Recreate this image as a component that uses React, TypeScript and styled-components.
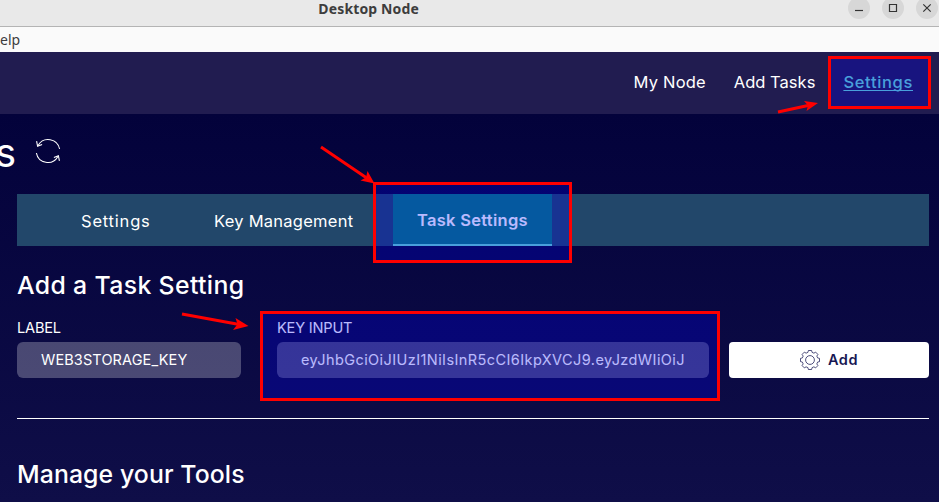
import React from 'react';
import styled, { createGlobalStyle, css } from 'styled-components';

const Global = createGlobalStyle`
  * { box-sizing: border-box; }
  html, body { margin: 0; padding: 0; }
  body { font-family: Inter, 'Liberation Sans', sans-serif; overflow: hidden; }
`;

const Window = styled.div`
  position: relative;
  width: 939px;
  height: 502px;
  overflow: hidden;
  display: flex;
  flex-direction: column;
  color: #fff;
`;

const TitleBar = styled.header`
  display: flex;
  justify-content: space-between;
  flex: none;
  height: 27px;
  overflow: hidden;
  background: #e9e9e9;
  border-bottom: 1px solid #b4b4b4;
`;

const WindowTitle = styled.div`
  width: 419px;
  text-align: right;
  white-space: nowrap;
  font: 700 14px/18px 'Noto Sans', sans-serif;
  letter-spacing: 0.14px;
  color: #3d3d3d;
`;

const WindowControls = styled.div`
  display: flex;
  gap: 12px;
  margin: -3px 1px 0 0;
`;

const ControlButton = styled.span`
  display: flex;
  width: 22px;
  height: 22px;
  border-radius: 50%;
  background: #d7d7d7;
`;

const MenuBar = styled.nav`
  flex: none;
  height: 25px;
  background: #fafafa;
  font: 400 14px/26px 'Noto Sans', sans-serif;
  color: #3d3d3d;
`;

const AppHeader = styled.nav`
  display: flex;
  flex: none;
  align-items: center;
  justify-content: flex-end;
  gap: 28px;
  height: 62px;
  padding: 0 26px 2px 0;
  background: #211c50;
`;

const NavLink = styled.a<{ $spacing: number; $active?: boolean }>`
  font-size: 16.5px;
  line-height: 24px;
  letter-spacing: ${(p) => p.$spacing}px;
  color: #fff;
  ${(p) =>
    p.$active &&
    css`
      font-weight: 500;
      color: #65dbcf;
      text-decoration: underline;
      text-decoration-thickness: 1px;
      text-underline-offset: 2px;
      text-decoration-skip-ink: none;
    `}
`;

const Content = styled.main`
  flex: 1;
  display: flex;
  flex-direction: column;
  padding-right: 10px;
  background: linear-gradient(#03023b, #0f0e48);
`;

const PageHeading = styled.div`
  display: flex;
  align-items: center;
  height: 80px;
`;

const PageTitle = styled.h1`
  display: flex;
  justify-content: flex-end;
  width: 16px;
  margin: -3px 0 0;
  overflow: hidden;
  font-size: 40px;
  font-weight: 400;
  line-height: 48px;
`;

const RefreshIcon = styled.svg`
  width: 26px;
  height: 26px;
  margin: -7px 0 0 19px;
  fill: none;
  stroke: #fff;
  stroke-width: 1.1;
`;

const Body = styled.div`
  display: flex;
  flex-direction: column;
  padding-left: 17px;
`;

const TabBar = styled.div`
  display: flex;
  gap: 16px;
  height: 52px;
  margin-bottom: 23px;
  padding-left: 40px;
  background: #22476a;
`;

const Tab = styled.button<{ $width: number; $spacing: number; $active?: boolean }>`
  width: ${(p) => p.$width}px;
  padding: 3px 0 0 24px;
  border: 0;
  border-bottom: 2px solid transparent;
  background: none;
  text-align: left;
  white-space: nowrap;
  font: 400 16.5px/24px Inter, sans-serif;
  letter-spacing: ${(p) => p.$spacing}px;
  color: #fff;
  ${(p) =>
    p.$active &&
    css`
      padding-top: 1px;
      font-weight: 600;
      background: #077a7d;
      border-bottom-color: #65dbcf;
    `}
`;

const SectionTitle = styled.h2<{ $spacing: number }>`
  margin: 0;
  font-size: 24.8px;
  font-weight: 500;
  line-height: 32px;
  letter-spacing: ${(p) => p.$spacing}px;
`;

const Form = styled.div`
  display: grid;
  grid-template-columns: 224px 1fr 200px;
  align-items: end;
  height: 60px;
  margin: 17px 0 40px;
`;

const Field = styled.label<{ $inset?: boolean }>`
  display: flex;
  flex-direction: column;
  margin: ${(p) => (p.$inset ? '0 20px 0 36px' : '0')};
`;

const FieldLabel = styled.span`
  height: 24px;
  font-size: 14.6px;
  line-height: 20px;
  letter-spacing: -0.2px;
`;

const FieldValue = styled.span<{ $spacing: number }>`
  height: 36px;
  padding-left: 24px;
  border-radius: 6px;
  background: rgba(255, 255, 255, 0.26);
  font-size: 14.5px;
  line-height: 36px;
  letter-spacing: ${(p) => p.$spacing}px;
  white-space: nowrap;
`;

const AddButton = styled.button`
  display: flex;
  align-items: center;
  justify-content: center;
  gap: 7px;
  height: 36px;
  padding: 0 1px 0 0;
  border: 0;
  border-radius: 4px;
  background: #fff;
  font: 600 14.5px/20px Inter, sans-serif;
  letter-spacing: 0.5px;
  color: #171753;
`;

const Divider = styled.hr`
  width: 100%;
  height: 1px;
  margin: 0 0 39px;
  border: 0;
  background: #fff;
`;

const Highlight = styled.div<{ $x: number; $y: number; $w: number; $h: number }>`
  position: absolute;
  left: ${(p) => p.$x}px;
  top: ${(p) => p.$y}px;
  width: ${(p) => p.$w}px;
  height: ${(p) => p.$h}px;
  border: 3px solid #f00;
  background: rgba(0, 0, 255, 0.27);
  background-clip: padding-box;
`;

const Arrows = styled.svg`
  position: absolute;
  inset: 0;
  width: 939px;
  height: 502px;
  pointer-events: none;
  stroke: #f00;
  stroke-width: 3;
  fill: #f00;
`;

const GearIcon = () => (
  <svg width="22" height="22" viewBox="-11 -11 22 22" fill="none" stroke="#171753" strokeWidth="0.75" strokeLinejoin="round">
    <circle r="4.4" />
    <path d="M-1.6-9.5H1.6L2.1-7.6Q3.1-7.3 3.9-6.8L5.6-7.9 7.9-5.6 6.8-3.9Q7.3-3.1 7.6-2.1L9.5-1.6V1.6L7.6 2.1Q7.3 3.1 6.8 3.9L7.9 5.6 5.6 7.9 3.9 6.8Q3.1 7.3 2.1 7.6L1.6 9.5H-1.6L-2.1 7.6Q-3.1 7.3-3.9 6.8L-5.6 7.9-7.9 5.6-6.8 3.9Q-7.3 3.1-7.6 2.1L-9.5 1.6V-1.6L-7.6-2.1Q-7.3-3.1-6.8-3.9L-7.9-5.6-5.6-7.9-3.9-6.8Q-3.1-7.3-2.1-7.6Z" />
  </svg>
);

const controls = ['M7 13.5H15', 'M7.5 7.5H14.5V14.5H7.5Z', 'M7.3 7.3L14.7 14.7M14.7 7.3L7.3 14.7'];

export default function App() {
  return (
    <Window>
      <Global />
      <TitleBar>
        <WindowTitle>Desktop Node</WindowTitle>
        <WindowControls>
          {controls.map((d) => (
            <ControlButton key={d}>
              <svg width="22" height="22" fill="none" stroke="#333" strokeWidth="1.2">
                <path d={d} />
              </svg>
            </ControlButton>
          ))}
        </WindowControls>
      </TitleBar>
      <MenuBar>elp</MenuBar>
      <AppHeader>
        <NavLink $spacing={0.18}>My Node</NavLink>
        <NavLink $spacing={0.02}>Add Tasks</NavLink>
        <NavLink $spacing={0.66} $active>Settings</NavLink>
      </AppHeader>
      <Content>
        <PageHeading>
          <PageTitle>s</PageTitle>
          <RefreshIcon viewBox="0 0 26 26">
            <path d="M3.2 7.2A11.6 11.6 0 0 1 24.6 11M1.6 3.2L2.6 8.3 7.1 6.4M22.8 18.8A11.6 11.6 0 0 1 1.4 15M24.4 22.8L23.4 17.7 18.9 19.6" />
          </RefreshIcon>
        </PageHeading>
        <Body>
          <TabBar>
            <Tab $width={117} $spacing={0.8}>Settings</Tab>
            <Tab $width={187} $spacing={0.25}>Key Management</Tab>
            <Tab $width={159} $spacing={0.28} $active>Task Settings</Tab>
          </TabBar>
          <SectionTitle $spacing={0.36}>Add a Task Setting</SectionTitle>
          <Form>
            <Field>
              <FieldLabel>LABEL</FieldLabel>
              <FieldValue $spacing={0.12}>WEB3STORAGE_KEY</FieldValue>
            </Field>
            <Field $inset>
              <FieldLabel>KEY INPUT</FieldLabel>
              <FieldValue $spacing={0.42}>eyJhbGciOiJIUzI1NiIsInR5cCI6IkpXVCJ9.eyJzdWIiOiJ</FieldValue>
            </Field>
            <AddButton>
              <GearIcon />
              Add
            </AddButton>
          </Form>
          <Divider />
          <SectionTitle $spacing={0.1}>Manage your Tools</SectionTitle>
        </Body>
      </Content>
      <Highlight $x={828} $y={56} $w={103} $h={53} />
      <Highlight $x={373} $y={182} $w={199} $h={81} />
      <Highlight $x={260} $y={311} $w={460} $h={90} />
      <Arrows>
        <path d="M778 112L808 105.5M321 147L366 177.5M182 314L238 324.2" />
        <path stroke="none" d="M818 103L804 101 808 105.5 806.5 111ZM374.5 183.5L367.5 171 366 177.5 360.5 180.5ZM248.5 326L235.5 318 237.5 324.2 233 330Z" />
      </Arrows>
    </Window>
  );
}
